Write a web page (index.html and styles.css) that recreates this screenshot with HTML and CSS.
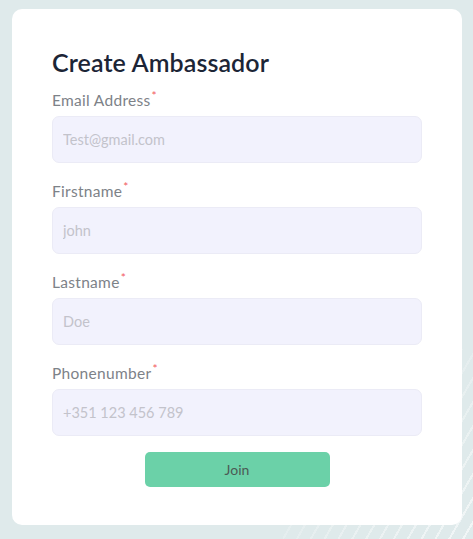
FILE: index.html
```html
<!DOCTYPE html>
<html lang="en">
<head>
<meta charset="utf-8">
<title>Create Ambassador</title>
<link rel="stylesheet" href="styles.css">
</head>
<body>
<div class="page">
  <form class="card">
    <h1 class="title">Create Ambassador</h1>
    <div class="field">
      <label class="label">Email Address<span class="req">*</span></label>
      <input class="input" type="text" placeholder="Test@gmail.com">
    </div>
    <div class="field">
      <label class="label">Firstname<span class="req">*</span></label>
      <input class="input" type="text" placeholder="john">
    </div>
    <div class="field">
      <label class="label">Lastname<span class="req">*</span></label>
      <input class="input" type="text" placeholder="Doe">
    </div>
    <div class="field">
      <label class="label">Phonenumber<span class="req">*</span></label>
      <input class="input" type="text" placeholder="+351 123 456 789">
    </div>
    <div class="actions">
      <button class="btn" type="button">Join</button>
    </div>
  </form>
</div>
</body>
</html>
```
FILE: styles.css
```css
* { box-sizing: border-box; }
html, body { margin: 0; padding: 0; }
body {
  width: 473px;
  height: 539px;
  overflow: hidden;
  background: #dfeaeb;
  font-family: "Lato", "Inter", sans-serif;
  position: relative;
}
body::after {
  content: "";
  position: absolute;
  right: 0;
  bottom: 0;
  width: 190px;
  height: 190px;
  background: repeating-linear-gradient(120deg, rgba(255,255,255,0) 0 10px, rgba(255,255,255,0.6) 10px 12px);
  -webkit-mask-image: linear-gradient(315deg, #000 0%, rgba(0,0,0,0) 75%);
  mask-image: linear-gradient(315deg, #000 0%, rgba(0,0,0,0) 75%);
  z-index: 0;
}
.page {
  padding: 9px 11px 14px 12px;
  position: relative;
  z-index: 1;
}
.card {
  width: 450px;
  height: 516px;
  background: #ffffff;
  border-radius: 10px;
  padding: 38px 40px 0 40px;
  display: flex;
  flex-direction: column;
}
.title {
  margin: 0 0 13px 0;
  font-size: 25px;
  line-height: 30px;
  font-weight: 600;
  color: #1c2536;
  letter-spacing: 0.1px;
}
.field {
  display: flex;
  flex-direction: column;
  gap: 6px;
  margin-bottom: 18px;
}
.label {
  font-size: 15.5px;
  line-height: 20px;
  height: 20px;
  color: #7d8288;
  letter-spacing: 0.3px;
}
.req {
  color: #f25a5f;
  font-size: 12px;
  line-height: 1;
  vertical-align: top;
  margin-left: 1px;
}
.input {
  height: 47px;
  width: 100%;
  border: 1px solid #ebebf6;
  background: #f2f2fd;
  border-radius: 7px;
  padding: 0 10px;
  font-family: inherit;
  font-size: 14.5px;
  color: #333;
  outline: none;
}
.input::placeholder { color: #c3c3cb; }
.actions {
  display: flex;
  justify-content: center;
  margin-top: -2px;
}
.btn {
  width: 185px;
  height: 35px;
  border: none;
  border-radius: 5px;
  background: #6bd1a8;
  color: #4b5a55;
  font-family: inherit;
  font-size: 14px;
  cursor: pointer;
}
```
